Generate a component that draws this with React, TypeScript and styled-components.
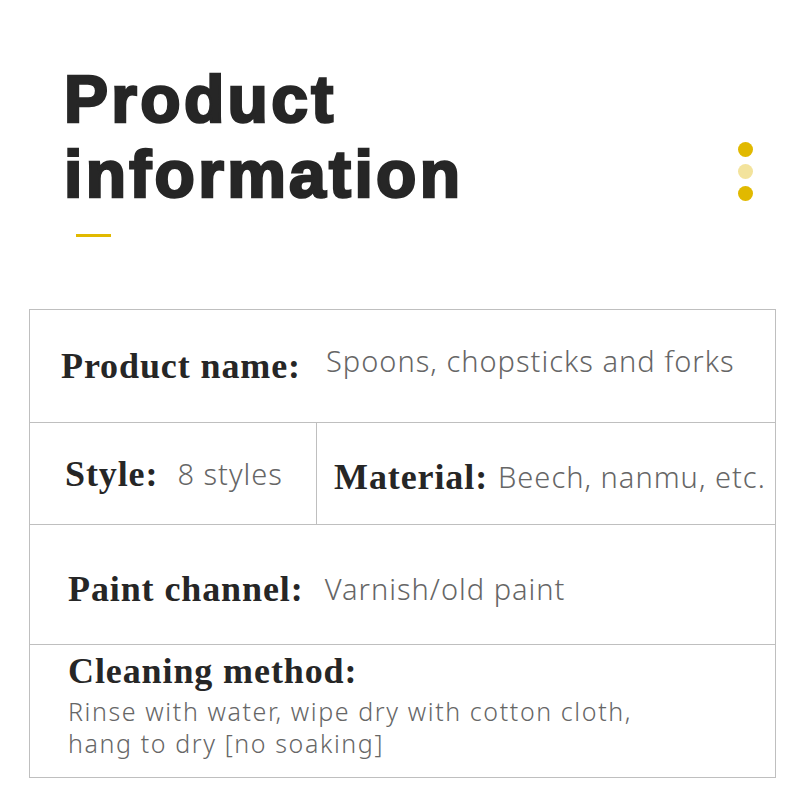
import React from "react";
import styled, { createGlobalStyle } from "styled-components";

const GlobalStyle = createGlobalStyle`
  html, body { margin: 0; padding: 0; background: #ffffff; }
  body { width: 800px; height: 800px; overflow: hidden; }
`;

const Page = styled.div`
  width: 800px;
  height: 800px;
  box-sizing: border-box;
  padding-top: 62px;
  background: #ffffff;
`;

const Header = styled.header`
  display: flex;
  justify-content: space-between;
  align-items: flex-start;
  padding-left: 64px;
  padding-right: 47px;
`;

const Title = styled.h1`
  margin: 0;
  font-family: "Liberation Sans", Arial, sans-serif;
  font-weight: 700;
  font-size: 66px;
  line-height: 75px;
  letter-spacing: 3.3px;
  color: #262626;
  -webkit-text-stroke: 2.6px #262626;
`;

const Dots = styled.div`
  display: flex;
  flex-direction: column;
  gap: 7px;
  margin-top: 80px;
`;

const Dot = styled.span<{ $light?: boolean }>`
  display: block;
  width: 15px;
  height: 15px;
  border-radius: 50%;
  background: ${(p) => (p.$light ? "#f3e39c" : "#e1b900")};
`;

const Accent = styled.div`
  width: 35px;
  height: 3px;
  margin: 22px 0 0 76px;
  background: #e1b900;
`;

const Table = styled.section`
  width: 747px;
  box-sizing: border-box;
  margin: 72px 0 0 29px;
  border: 1px solid #bfbfbf;
  display: flex;
  flex-direction: column;
`;

const Row = styled.div<{ $h: number }>`
  display: flex;
  height: ${(p) => p.$h}px;
  box-sizing: border-box;
  & + & {
    border-top: 1px solid #bfbfbf;
  }
`;

const Cell = styled.div<{ $pad: number; $w?: number; $top?: number }>`
  display: flex;
  align-items: center;
  box-sizing: border-box;
  padding-left: ${(p) => p.$pad}px;
  padding-top: ${(p) => p.$top ?? 0}px;
  ${(p) => (p.$w ? `width: ${p.$w}px; flex: none;` : "flex: 1;")}
  & + & {
    border-left: 1px solid #bfbfbf;
  }
`;

const StackCell = styled.div`
  display: flex;
  flex-direction: column;
  padding: 6px 0 0 38px;
`;

const Label = styled.span<{ $gap: number }>`
  font-family: "Liberation Serif", "Times New Roman", serif;
  font-weight: 700;
  font-size: 36px;
  line-height: 40px;
  letter-spacing: 0.9px;
  color: #262626;
  margin-right: ${(p) => p.$gap}px;
  white-space: nowrap;
`;

const Value = styled.span<{ $raise?: number }>`
  font-family: "Noto Sans", "Open Sans", sans-serif;
  font-weight: 300;
  font-size: 29px;
  line-height: 38px;
  letter-spacing: 1px;
  color: #666666;
  white-space: nowrap;
  padding-bottom: ${(p) => (p.$raise ?? 0) * 2}px;
`;

const Body = styled.p`
  margin: 4px 0 0;
  font-family: "Noto Sans", "Open Sans", sans-serif;
  font-weight: 300;
  font-size: 25px;
  line-height: 32px;
  letter-spacing: 1.6px;
  color: #666666;
`;

export default function App() {
  return (
    <>
      <GlobalStyle />
      <Page>
        <Header>
          <Title>
            Product
            <br />
            information
          </Title>
          <Dots>
            <Dot />
            <Dot $light />
            <Dot />
          </Dots>
        </Header>
        <Accent />
        <Table>
          <Row $h={112}>
            <Cell $pad={31}>
              <Label $gap={25}>Product name:</Label>
              <Value $raise={5}>Spoons, chopsticks and forks</Value>
            </Cell>
          </Row>
          <Row $h={102}>
            <Cell $pad={35} $w={286}>
              <Label $gap={19}>Style:</Label>
              <Value>8 styles</Value>
            </Cell>
            <Cell $pad={17} $top={6}>
              <Label $gap={10}>Material:</Label>
              <Value>Beech, nanmu, etc.</Value>
            </Cell>
          </Row>
          <Row $h={120}>
            <Cell $pad={38} $top={8}>
              <Label $gap={21}>Paint channel:</Label>
              <Value>Varnish/old paint</Value>
            </Cell>
          </Row>
          <Row $h={133}>
            <StackCell>
              <Label $gap={0}>Cleaning method:</Label>
              <Body>
                Rinse with water, wipe dry with cotton cloth,
                <br />
                hang to dry [no soaking]
              </Body>
            </StackCell>
          </Row>
        </Table>
      </Page>
    </>
  );
}
